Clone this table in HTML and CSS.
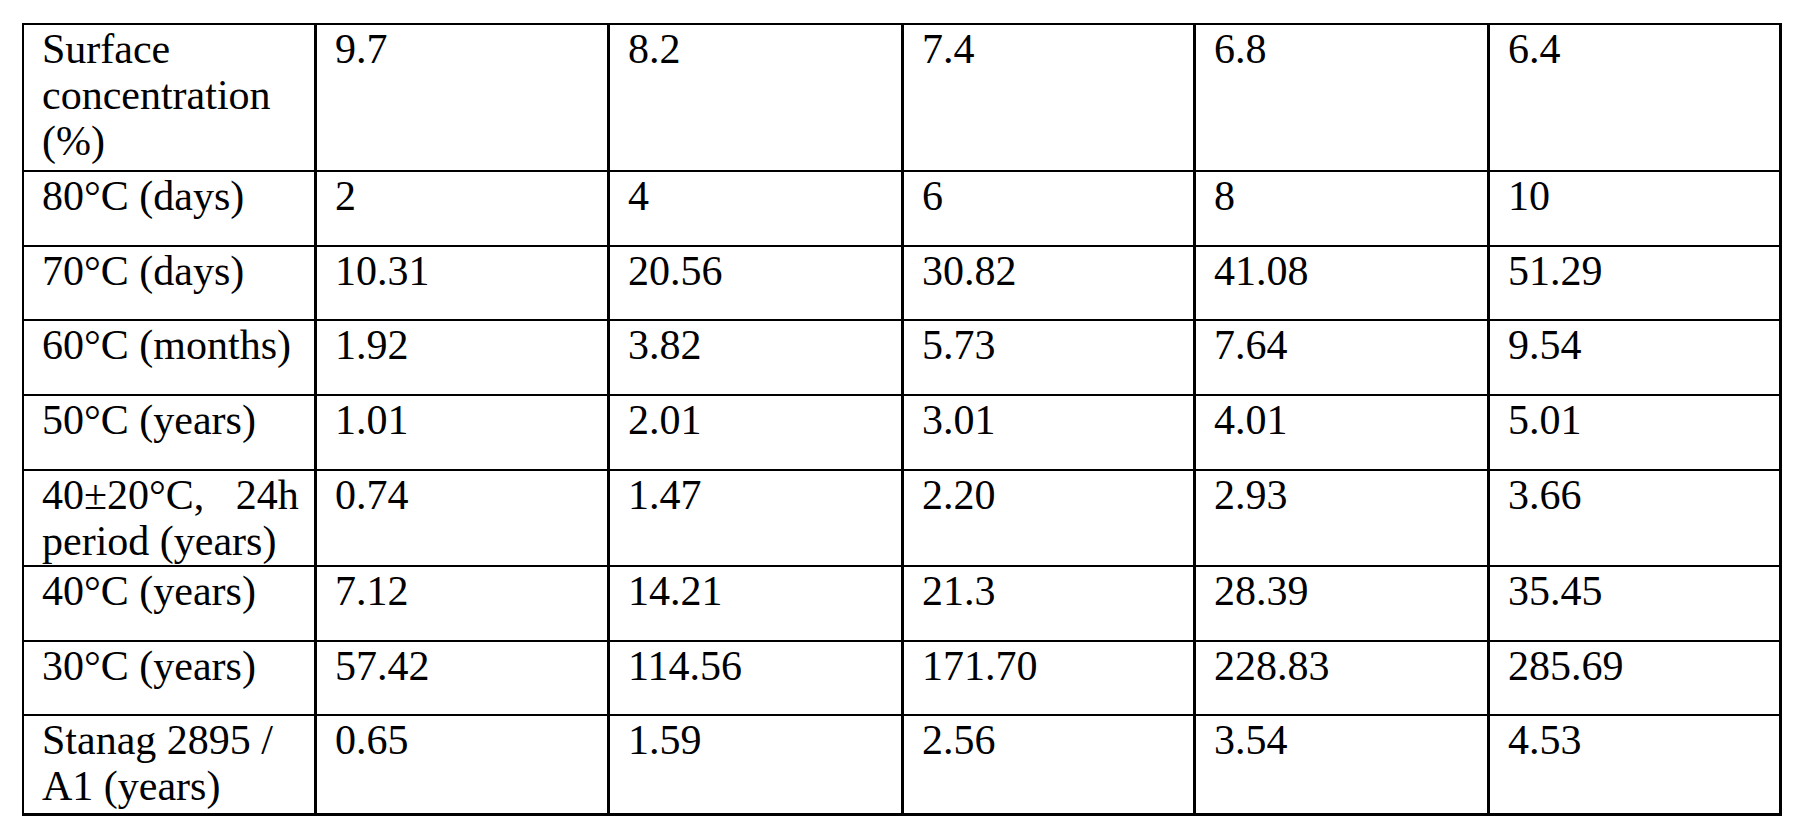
FILE: index.html
```html
<!DOCTYPE html>
<html lang="en">
<head>
<meta charset="utf-8">
<title>Table</title>
<link rel="stylesheet" href="styles.css">
</head>
<body>
<div class="sheet" role="table">
  <div class="cell">Surface concentration (%)</div>
  <div class="cell">9.7</div>
  <div class="cell">8.2</div>
  <div class="cell">7.4</div>
  <div class="cell">6.8</div>
  <div class="cell">6.4</div>

  <div class="cell">80°C (days)</div>
  <div class="cell">2</div>
  <div class="cell">4</div>
  <div class="cell">6</div>
  <div class="cell">8</div>
  <div class="cell">10</div>

  <div class="cell">70°C (days)</div>
  <div class="cell">10.31</div>
  <div class="cell">20.56</div>
  <div class="cell">30.82</div>
  <div class="cell">41.08</div>
  <div class="cell">51.29</div>

  <div class="cell">60°C (months)</div>
  <div class="cell">1.92</div>
  <div class="cell">3.82</div>
  <div class="cell">5.73</div>
  <div class="cell">7.64</div>
  <div class="cell">9.54</div>

  <div class="cell">50°C (years)</div>
  <div class="cell">1.01</div>
  <div class="cell">2.01</div>
  <div class="cell">3.01</div>
  <div class="cell">4.01</div>
  <div class="cell">5.01</div>

  <div class="cell">40±20°C,&nbsp;&nbsp; 24h period (years)</div>
  <div class="cell">0.74</div>
  <div class="cell">1.47</div>
  <div class="cell">2.20</div>
  <div class="cell">2.93</div>
  <div class="cell">3.66</div>

  <div class="cell">40°C (years)</div>
  <div class="cell">7.12</div>
  <div class="cell">14.21</div>
  <div class="cell">21.3</div>
  <div class="cell">28.39</div>
  <div class="cell">35.45</div>

  <div class="cell">30°C (years)</div>
  <div class="cell">57.42</div>
  <div class="cell">114.56</div>
  <div class="cell">171.70</div>
  <div class="cell">228.83</div>
  <div class="cell">285.69</div>

  <div class="cell">Stanag 2895 / A1 (years)</div>
  <div class="cell">0.65</div>
  <div class="cell">1.59</div>
  <div class="cell">2.56</div>
  <div class="cell">3.54</div>
  <div class="cell">4.53</div>
</div>
</body>
</html>
```
FILE: styles.css
```css
html, body {
  margin: 0;
  padding: 0;
  background: #ffffff;
}

body {
  padding: 23px 0 0 22px;
  font-family: "Liberation Serif", "Times New Roman", "DejaVu Serif", serif;
  color: #000000;
}

.sheet {
  display: grid;
  width: 1760px;
  box-sizing: border-box;
  padding: 2px 3px 3px 2px;
  background: #000000;
  grid-template-columns: 290px 290px 291px 289px 291px 289px;
  grid-template-rows: 145px 73px 72px 73px 73px 94px 73px 72px 97px;
  column-gap: 3px;
  row-gap: 2px;
}

.cell {
  background: #ffffff;
  padding: 1px 8px 0 18px;
  font-size: 42px;
  line-height: 46px;
}
```
